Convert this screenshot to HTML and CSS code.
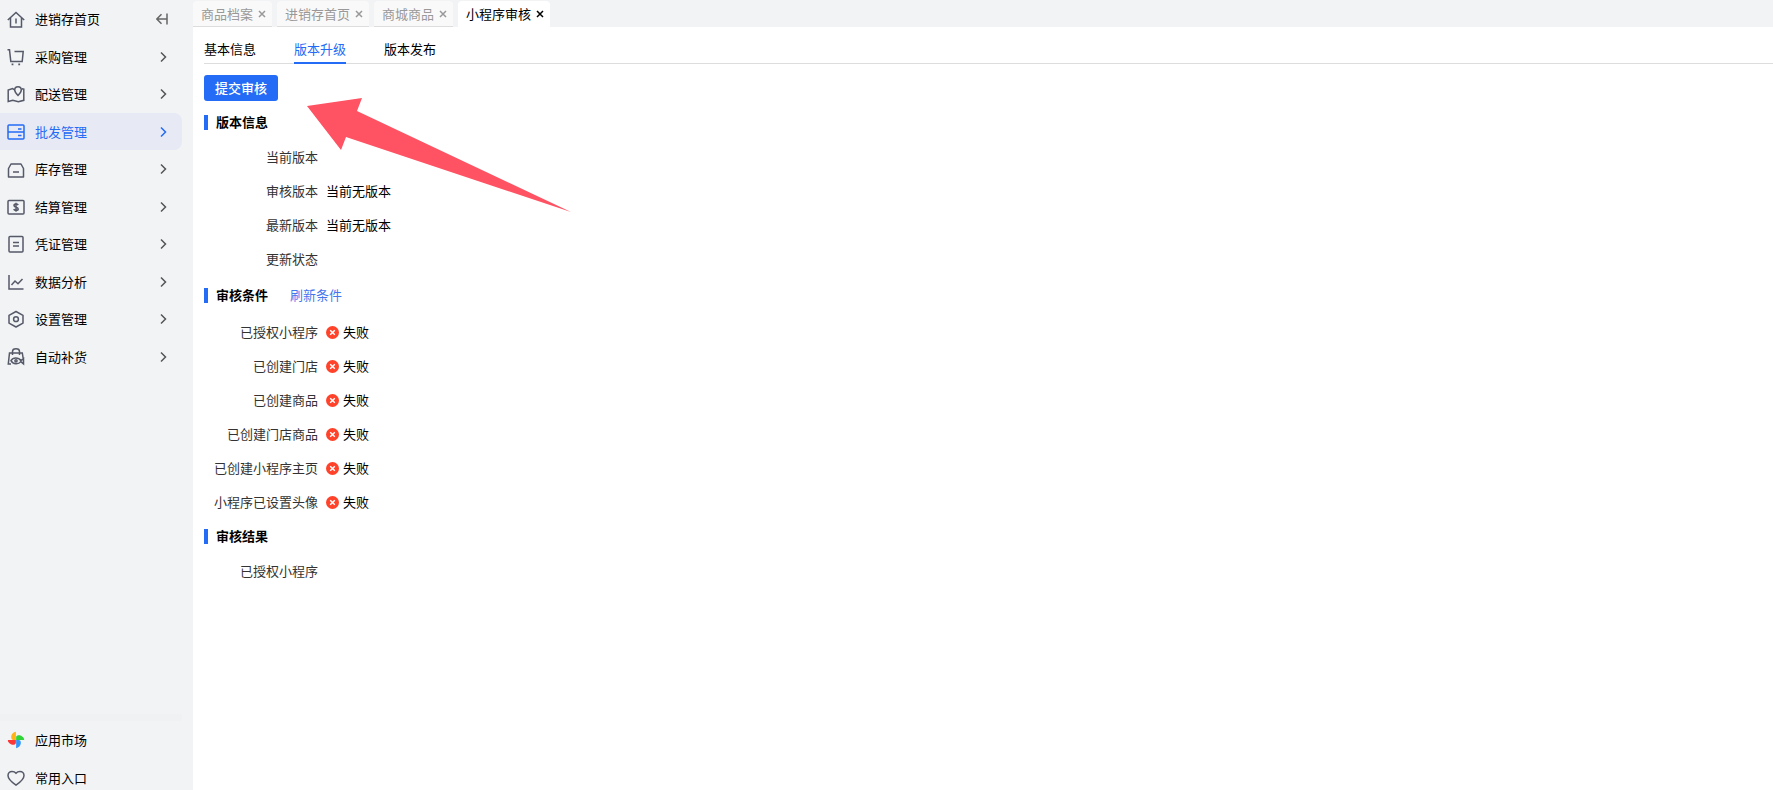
FILE: index.html
```html
<!DOCTYPE html>
<html lang="zh-CN">

<head>
    <meta charset="UTF-8">
    <meta name="viewport" content="width=device-width, initial-scale=1.0">
    <title>小程序审核</title>
    <link rel="stylesheet" href="styles.css">
</head>

<body>
    <svg class="sprite" aria-hidden="true">
        <symbol id="arrow-right" viewBox="0 0 8 12"><path d="M2 1.5l4.5 4.5L2 10.5"/></symbol>
        <symbol id="close" viewBox="0 0 8 8"><path d="M1 1l6 6M7 1L1 7"/></symbol>
        <symbol id="fail" viewBox="0 0 13 13">
            <circle cx="6.5" cy="6.5" r="6.5" fill="#ff4229" stroke="none"/>
            <path d="M4.2 4.2l4.6 4.6M8.8 4.2L4.2 8.8" stroke="#fff" stroke-width="1.5"/>
        </symbol>
    </svg>

    <aside class="sidebar">
        <nav>
            <ul class="menu">
                <li class="item">
                    <a href="#">
                        <svg class="icon" viewBox="0 0 18 18"><path d="M.8 10L9 2.500l8.200 7.500M3.500 8v9h11V8M9 8.500v5"/></svg>
                        进销存首页
                    </a>
                    <button class="collapse" aria-label="收起菜单">
                        <svg viewBox="0 0 12 12"><path d="M11 .5v11M11 6H1M5.5 1.2L.8 6l4.700 4.800"/></svg>
                    </button>
                </li>
                <li class="item">
                    <a href="#">
                        <svg class="icon" viewBox="0 0 18 18"><path d="M.5 1.800h2l1.300 11.700h11.400l1-10H7.500"/><path d="M4.600 16.400h1.800M11.300 16.400h1.800" stroke-width="1.800"/></svg>
                        采购管理
                        <svg class="chevron"><use href="#arrow-right"/></svg>
                    </a>
                </li>
                <li class="item">
                    <a href="#">
                        <svg class="icon" viewBox="0 0 18 18"><path d="M7.600 4.800L5.600 3.600 1.200 5v11.500l4.600-1.200 5.500 1.400 5.500-1.400V4.200l-2-.4"/><path d="M11 10.500C8.800 8.300 7.700 6.600 7.700 5a3.300 3.300 0 0 1 6.600 0c0 1.600-1.100 3.300-3.300 5.500z"/></svg>
                        配送管理
                        <svg class="chevron"><use href="#arrow-right"/></svg>
                    </a>
                </li>
                <li class="item active">
                    <a href="#">
                        <svg class="icon" viewBox="0 0 18 18"><rect x="1" y="2" width="16" height="14" rx="1"/><path d="M1 9h16M11 6h3.500M11 12.500h3.500"/></svg>
                        批发管理
                        <svg class="chevron"><use href="#arrow-right"/></svg>
                    </a>
                </li>
                <li class="item">
                    <a href="#">
                        <svg class="icon" viewBox="0 0 18 18"><path d="M4 4h10l2.500 4.500V17h-15V8.500zM6 12h6" stroke-linejoin="round"/></svg>
                        库存管理
                        <svg class="chevron"><use href="#arrow-right"/></svg>
                    </a>
                </li>
                <li class="item">
                    <a href="#">
                        <svg class="icon" viewBox="0 0 18 18"><rect x="1" y="2.500" width="16" height="13.500" rx="1"/><path d="M11.200 7c-.5-.8-1.200-1-2.200-1-1.200 0-2 .5-2 1.500 0 2.200 4.200 1.200 4.200 3.400 0 1-.9 1.500-2.200 1.500-1.100 0-1.900-.4-2.300-1.200M9 4.700v9"/></svg>
                        结算管理
                        <svg class="chevron"><use href="#arrow-right"/></svg>
                    </a>
                </li>
                <li class="item">
                    <a href="#">
                        <svg class="icon" viewBox="0 0 18 18"><rect x="2" y="1.500" width="14" height="15.500" rx="1"/><path d="M6 7.500h6M6 11h6"/></svg>
                        凭证管理
                        <svg class="chevron"><use href="#arrow-right"/></svg>
                    </a>
                </li>
                <li class="item">
                    <a href="#">
                        <svg class="icon" viewBox="0 0 18 18"><path d="M2 2v14h14.500M4.500 12l3.500-4 3 2.800L15.500 6"/></svg>
                        数据分析
                        <svg class="chevron"><use href="#arrow-right"/></svg>
                    </a>
                </li>
                <li class="item">
                    <a href="#">
                        <svg class="icon" viewBox="0 0 18 18"><path d="M9 1.500l7 3.800v7.800l-7 3.900-7-3.900V5.300z" stroke-linejoin="round"/><circle cx="9" cy="9.200" r="2.400"/></svg>
                        设置管理
                        <svg class="chevron"><use href="#arrow-right"/></svg>
                    </a>
                </li>
                <li class="item">
                    <a href="#">
                        <svg class="icon" viewBox="0 0 18 18"><path d="M4 16H1.300L2.500 5h12.800l.8 5M5.500 7V3.500C5.500 1.800 7 .8 9 .8s3.500 1 3.500 2.700V7"/><path d="M4 12.600c2-3.400 7.500-3.400 9.800 0l2.700-2v5.200l-2.700-2.200c-2.300 3-7.800 3-9.800-1z"/><circle cx="9" cy="12.800" r="1.100"/></svg>
                        自动补货
                        <svg class="chevron"><use href="#arrow-right"/></svg>
                    </a>
                </li>
            </ul>
        </nav>
        <ul class="menu bottom">
            <li class="item">
                <a href="#">
                    <svg class="icon market" viewBox="0 0 18 18">
                        <path fill="#ffb118" d="M8.900 8.900H6C3 8.500 3.500 1.500 8.900.8z"/>
                        <path fill="#2fd437" d="M9.100 8.900V6C9.500 3 16.500 3.500 17.200 8.900z"/>
                        <path fill="#3396fb" d="M9.100 9.100H12c3 .4 2.500 7.400-2.900 8.100z"/>
                        <path fill="#fb3738" d="M8.900 9.100V12C8.500 15 1.500 14.500.8 9.100z"/>
                    </svg>
                    应用市场
                </a>
            </li>
            <li class="item">
                <a href="#">
                    <svg class="icon" viewBox="0 0 18 18"><path d="M9 16.200C4 12.800 1 10 1 6.600 1 4.200 2.800 2.500 5 2.500c1.700 0 3 .5 4 1.700 1-1.200 2.300-1.700 4-1.700 2.200 0 4 1.700 4 4.100 0 3.400-3 6.200-8 9.600z"/></svg>
                    常用入口
                </a>
            </li>
        </ul>
    </aside>

    <main class="main">
        <div class="tabs">
            <div class="tab">商品档案<button aria-label="关闭"><svg><use href="#close"/></svg></button></div>
            <div class="tab">进销存首页<button aria-label="关闭"><svg><use href="#close"/></svg></button></div>
            <div class="tab">商城商品<button aria-label="关闭"><svg><use href="#close"/></svg></button></div>
            <div class="tab active">小程序审核<button aria-label="关闭"><svg><use href="#close"/></svg></button></div>
        </div>

        <div class="content">
            <nav class="subtabs">
                <a href="#">基本信息</a>
                <a href="#" class="active">版本升级</a>
                <a href="#">版本发布</a>
            </nav>

            <button class="submit">提交审核</button>

            <section>
                <h2>版本信息</h2>
                <dl class="info">
                    <dt>当前版本</dt><dd></dd>
                    <dt>审核版本</dt><dd>当前无版本</dd>
                    <dt>最新版本</dt><dd>当前无版本</dd>
                    <dt>更新状态</dt><dd></dd>
                </dl>
            </section>

            <section>
                <h2>审核条件 <a href="#">刷新条件</a></h2>
                <dl class="info conditions">
                    <dt>已授权小程序</dt><dd><svg class="fail"><use href="#fail"/></svg>失败</dd>
                    <dt>已创建门店</dt><dd><svg class="fail"><use href="#fail"/></svg>失败</dd>
                    <dt>已创建商品</dt><dd><svg class="fail"><use href="#fail"/></svg>失败</dd>
                    <dt>已创建门店商品</dt><dd><svg class="fail"><use href="#fail"/></svg>失败</dd>
                    <dt>已创建小程序主页</dt><dd><svg class="fail"><use href="#fail"/></svg>失败</dd>
                    <dt>小程序已设置头像</dt><dd><svg class="fail"><use href="#fail"/></svg>失败</dd>
                </dl>
            </section>

            <section>
                <h2>审核结果</h2>
                <dl class="info">
                    <dt>已授权小程序</dt><dd></dd>
                </dl>
            </section>

            <!-- arrow pointing at the submit button -->
            <svg class="pointer" viewBox="0 0 265 115" aria-hidden="true">
                <path d="M0 8L55 0l-5 13 214 101L39 39l-5 13z"/>
            </svg>
        </div>
    </main>
</body>

</html>
```

FILE: styles.css
```css
* {
    box-sizing: border-box;
}

body {
    margin: 0;
    height: 100vh;
    display: flex;
    overflow: hidden;
    background-color: #f1f3f5;
    color: #000;
    font-family: "Noto Sans CJK SC", sans-serif;
    font-size: 13px;
    line-height: 20px;
}

a {
    color: inherit;
    text-decoration: none;
}

button {
    font: inherit;
    border: none;
    padding: 0;
    background: none;
    cursor: pointer;
}

ul,
dl,
dd,
h2 {
    margin: 0;
    padding: 0;
    list-style: none;
}

svg {
    display: block;
    fill: none;
    stroke: currentColor;
}

.sprite {
    display: none;
}

/* sidebar */
.sidebar {
    width: 193px;
    flex-shrink: 0;
    padding-right: 11px;
    display: flex;
    flex-direction: column;
    justify-content: space-between;
}

.item {
    display: flex;
    align-items: center;
    height: 37px;
    border-radius: 0 8px 8px 0;
}

.item:nth-child(odd) {
    margin-bottom: 1px;
}

.item a {
    flex: 1;
    display: flex;
    align-items: center;
    padding: 0 15px 0 7px;
}

.item.active {
    background-color: #e7eaf4;
    color: #246bf5;
}

.icon {
    width: 18px;
    height: 18px;
    margin-right: 10px;
    color: #565968;
    stroke-width: 1.5;
}

.active .icon,
.active .chevron {
    color: #246bf5;
}

.icon.market {
    stroke: none;
}

.chevron {
    width: 8px;
    height: 12px;
    margin-left: auto;
    color: #555;
    stroke-width: 1.5;
}

.collapse {
    margin-right: 14px;
    color: #666;
}

.collapse svg {
    width: 12px;
    height: 12px;
    stroke-width: 1.5;
}

/* the last entry runs past the window's bottom edge */
.bottom {
    margin-bottom: -6px;
    border-top: 7px solid #eff1f3;
}

/* page tabs */
.main {
    flex: 1;
    display: flex;
    flex-direction: column;
}

.tabs {
    display: flex;
    gap: 5px;
    padding-top: 1px;
}

.tab {
    display: flex;
    align-items: center;
    gap: 5px;
    height: 26px;
    padding: 0 6px 0 8px;
    border-bottom: 1px solid #ddd;
    border-radius: 4px 4px 0 0;
    background-color: #f9f9f9;
    color: #999;
}

.tab.active {
    border-bottom-color: #fff;
    background-color: #fff;
    color: #000;
}

.tab button {
    color: inherit;
}

.tab svg {
    width: 8px;
    height: 8px;
    stroke-width: 1.5;
}

/* content */
.content {
    position: relative;
    flex: 1;
    padding: 10px 0 0 11px;
    background-color: #fff;
}

.subtabs {
    display: flex;
    gap: 38px;
    border-bottom: 1px solid #ddd;
}

.subtabs a {
    height: 27px;
    line-height: 24px;
    margin-bottom: -1px;
}

.subtabs a.active {
    color: #246bf5;
    border-bottom: 2px solid #246bf5;
}

.submit {
    display: block;
    height: 26px;
    margin: 11px 0 10px;
    padding: 0 11px;
    border-radius: 3px;
    background-color: #246bf5;
    color: #fff;
    font-weight: 500;
}

h2 {
    display: flex;
    align-items: center;
    height: 22px;
    font-size: 13px;
    font-weight: 700;
}

h2::before {
    content: "";
    width: 4px;
    height: 15px;
    margin-right: 8px;
    background-color: #246bf5;
}

h2 a {
    margin-left: 22px;
    color: #4377ee;
    font-weight: 400;
}

.info {
    display: grid;
    grid-template-columns: 114px 1fr;
    column-gap: 8px;
    grid-auto-rows: 34px;
    align-items: center;
    padding: 7px 0 8px;
}

.info.conditions {
    padding: 9px 0 6px;
}

.info dt {
    text-align: right;
    color: #333;
}

.info dd {
    display: flex;
    align-items: center;
    gap: 4px;
}

.fail {
    width: 13px;
    height: 13px;
}

.pointer {
    position: absolute;
    left: 114px;
    top: 71px;
    width: 265px;
    height: 115px;
    fill: #ff5263;
    stroke: none;
}
```
